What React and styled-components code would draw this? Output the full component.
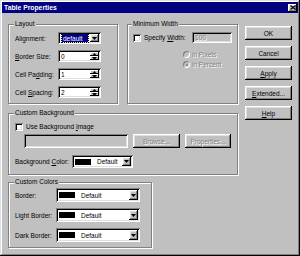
import React from "react";
import styled, { createGlobalStyle } from "styled-components";

const GlobalStyle = createGlobalStyle`
  html, body {
    margin: 0;
    padding: 0;
    background: #c0c0c0;
  }
  body {
    font-family: "Liberation Sans", Arial, sans-serif;
    font-size: 6.5px;
    color: #000;
  }
`;

const raised = `
  box-shadow: inset -1px -1px #000, inset 1px 1px #fff, inset -2px -2px #808080, inset 2px 2px #dfdfdf;
`;

const sunken = `
  box-shadow: inset 1px 1px #808080, inset -1px -1px #fff, inset 2px 2px #000, inset -2px -2px #dfdfdf;
`;

const Window = styled.div`
  width: 300px;
  height: 256px;
  box-sizing: border-box;
  padding: 2px;
  background: #c0c0c0;
  box-shadow: inset -1px -1px #000, inset 1px 1px #dfdfdf, inset -2px -2px #808080, inset 2px 2px #fff;
  display: flex;
  flex-direction: column;
`;

const TitleBar = styled.div`
  height: 11px;
  background: #000080;
  display: flex;
  align-items: center;
  justify-content: space-between;
  padding: 0 1px 0 2px;
`;

const Title = styled.span`
  color: #fff;
  font-weight: bold;
  font-size: 6.8px;
`;

const CloseBox = styled.div`
  width: 9px;
  height: 8px;
  background: #c0c0c0;
  display: flex;
  align-items: center;
  justify-content: center;
  ${raised}
`;

const Body = styled.div`
  display: flex;
  padding: 11px 7px 0 6px;
  gap: 7px;
`;

const LeftCol = styled.div`
  width: 230px;
  display: flex;
  flex-direction: column;
`;

const TopRow = styled.div`
  display: grid;
  grid-template-columns: 110px 111px;
  gap: 9px;
`;

const Group = styled.div`
  box-sizing: border-box;
  border: 1px solid #808080;
  box-shadow: inset 1px 1px #fff, 1px 1px #fff;
  padding: 0 ${(p) => p.$pad ?? 6}px ${(p) => p.$bottom ?? 5}px;
  width: ${(p) => (p.$w ? `${p.$w}px` : "auto")};
  margin-top: ${(p) => p.$mt ?? 0}px;
`;

const Caption = styled.div`
  margin: -5px 0 0 -1px;
  padding: 0 1px;
  width: fit-content;
  line-height: 8px;
  background: #c0c0c0;
`;

const FormGrid = styled.div`
  display: grid;
  grid-template-columns: ${(p) => p.$cols};
  row-gap: ${(p) => p.$gap}px;
  align-items: center;
  margin-top: ${(p) => p.$mt}px;
`;

const Label = styled.span`
  white-space: nowrap;
  color: ${(p) => (p.$disabled ? "#808080" : "#000")};
  text-shadow: ${(p) => (p.$disabled ? "1px 1px #fff" : "none")};
`;

const U = styled.span`
  text-decoration: underline;
`;

const Field = styled.div`
  box-sizing: border-box;
  height: ${(p) => p.$h}px;
  width: ${(p) => (p.$w ? `${p.$w}px` : "auto")};
  background: ${(p) => (p.$disabled ? "#c0c0c0" : "#fff")};
  ${sunken}
  display: flex;
  align-items: center;
  padding: 2px;
  color: ${(p) => (p.$disabled ? "#808080" : "#000")};
`;

const FieldText = styled.span`
  flex: 1;
  padding-left: 1px;
  white-space: nowrap;
  display: flex;
  align-self: stretch;
  align-items: center;
`;

const Spin = styled.div`
  width: 9px;
  align-self: stretch;
  display: flex;
  flex-direction: column;
`;

const SpinBtn = styled.div`
  flex: 1;
  background: #c0c0c0;
  display: flex;
  align-items: center;
  justify-content: center;
  box-shadow: inset -1px -1px #000, inset 1px 1px #fff, inset -1px -1px #808080;
`;

const DropBtn = styled.div`
  width: 9px;
  align-self: stretch;
  background: #c0c0c0;
  display: flex;
  align-items: center;
  justify-content: center;
  ${raised}
`;

const Highlight = styled.span`
  flex: 1;
  align-self: stretch;
  display: flex;
  align-items: center;
  background: #000080;
  color: #fff;
  outline: 1px dotted #000;
  padding: 0 1px;
  margin: 0 2px 0 1px;
`;

const Swatch = styled.span`
  width: 16px;
  height: 6px;
  background: #000;
  margin: 0 5px 0 1px;
`;

const Check = styled.span`
  width: 8px;
  height: 8px;
  box-sizing: border-box;
  background: #fff;
  ${sunken}
  flex: none;
`;

const CheckRow = styled.div`
  display: flex;
  align-items: center;
  gap: 3px;
  height: ${(p) => p.$h}px;
  margin-top: ${(p) => p.$mt}px;
`;

const RadioList = styled.div`
  display: flex;
  flex-direction: column;
  gap: 3px;
  margin: 8px 0 0 50px;
`;

const RadioRow = styled.div`
  display: flex;
  align-items: center;
  gap: 2px;
  height: 7px;
`;

const Radio = styled.span`
  width: 7px;
  height: 7px;
  border-radius: 50%;
  box-sizing: border-box;
  background: #c0c0c0;
  box-shadow: inset 1px 1px #808080, inset -1px -1px #fff;
  display: flex;
  align-items: center;
  justify-content: center;
  &::after {
    content: "";
    width: 2px;
    height: 2px;
    border-radius: 50%;
    background: ${(p) => (p.$on ? "#808080" : "transparent")};
  }
`;

const Row = styled.div`
  display: flex;
  align-items: center;
  gap: ${(p) => p.$gap ?? 5}px;
  margin-top: ${(p) => p.$mt ?? 0}px;
  padding-left: ${(p) => p.$indent ?? 0}px;
`;

const Button = styled.div`
  box-sizing: border-box;
  width: ${(p) => p.$w ?? 47}px;
  height: 14px;
  background: #c0c0c0;
  ${raised}
  display: flex;
  align-items: center;
  justify-content: center;
  color: ${(p) => (p.$disabled ? "#808080" : "#000")};
  text-shadow: ${(p) => (p.$disabled ? "1px 1px #fff" : "none")};
  flex: none;
`;

const RightCol = styled.div`
  display: flex;
  flex-direction: column;
  gap: 6px;
  padding-top: 2px;
`;

const UpArrow = () => (
  <svg width="5" height="3" viewBox="0 0 5 3">
    <path d="M2.5 0 L5 3 L0 3 Z" fill="#000" />
  </svg>
);

const DownArrow = () => (
  <svg width="5" height="3" viewBox="0 0 5 3">
    <path d="M0 0 L5 0 L2.5 3 Z" fill="#000" />
  </svg>
);

const Spinner = ({ value }) => (
  <Field $h={12} $w={43}>
    <FieldText>{value}</FieldText>
    <Spin>
      <SpinBtn>
        <UpArrow />
      </SpinBtn>
      <SpinBtn>
        <DownArrow />
      </SpinBtn>
    </Spin>
  </Field>
);

const ColorSelect = ({ w, h = 14 }) => (
  <Field $h={h} $w={w}>
    <Swatch />
    <FieldText>Default</FieldText>
    <DropBtn>
      <DownArrow />
    </DropBtn>
  </Field>
);

export default function App() {
  return (
    <>
      <GlobalStyle />
      <Window>
        <TitleBar>
          <Title>Table Properties</Title>
          <CloseBox>
            <svg width="6" height="5" viewBox="0 0 6 5">
              <path d="M0.5 0.5 L5.5 4.5 M5.5 0.5 L0.5 4.5" stroke="#000" strokeWidth="1.2" />
            </svg>
          </CloseBox>
        </TitleBar>
        <Body>
          <LeftCol>
            <TopRow>
              <Group $bottom={5}>
                <Caption>Layout</Caption>
                <FormGrid $cols="43px 43px" $gap={6} $mt={4}>
                  <Label>Alignment:</Label>
                  <Field $h={12} $w={43}>
                    <FieldText>
                      <Highlight>default</Highlight>
                    </FieldText>
                    <DropBtn>
                      <DownArrow />
                    </DropBtn>
                  </Field>
                  <Label>
                    <U>B</U>order Size:
                  </Label>
                  <Spinner value="0" />
                  <Label>
                    Cell Pa<U>d</U>ding:
                  </Label>
                  <Spinner value="1" />
                  <Label>
                    Cell <U>S</U>pacing:
                  </Label>
                  <Spinner value="2" />
                </FormGrid>
              </Group>
              <Group $pad={5}>
                <Caption>Minimum Width</Caption>
                <Row $mt={4} $gap={3}>
                  <Check />
                  <Label>
                    Specify <U>W</U>idth:
                  </Label>
                  <Field $h={11} $w={40} $disabled style={{ marginLeft: "auto" }}>
                    <FieldText>
                      <Label $disabled>100</Label>
                    </FieldText>
                  </Field>
                </Row>
                <RadioList>
                  <RadioRow>
                    <Radio />
                    <Label $disabled>in Pixels</Label>
                  </RadioRow>
                  <RadioRow>
                    <Radio $on />
                    <Label $disabled>in Percent</Label>
                  </RadioRow>
                </RadioList>
              </Group>
            </TopRow>

            <Group $mt={9} $bottom={6}>
              <Caption>Custom Background</Caption>
              <CheckRow $h={9} $mt={5}>
                <Check />
                <Label>
                  Use Background <U>I</U>mage
                </Label>
              </CheckRow>
              <Row $mt={3} $indent={9}>
                <Field $h={14} $w={104} $disabled />
                <Button $disabled>Browse...</Button>
                <Button $disabled $w={46}>
                  Properties...
                </Button>
              </Row>
              <Row $mt={7} $gap={0}>
                <Label style={{ width: 57 }}>
                  Background <U>C</U>olor:
                </Label>
                <ColorSelect w={61} h={13} />
              </Row>
            </Group>

            <Group $w={144} $mt={7} $bottom={5}>
              <Caption>Custom Colors</Caption>
              <FormGrid $cols="41px 84px" $gap={6} $mt={2}>
                <Label>Border:</Label>
                <ColorSelect w={84} />
                <Label>Light Border:</Label>
                <ColorSelect w={84} />
                <Label>Dark Border:</Label>
                <ColorSelect w={84} />
              </FormGrid>
            </Group>
          </LeftCol>

          <RightCol>
            <Button>OK</Button>
            <Button>Cancel</Button>
            <Button>
              <U>A</U>pply
            </Button>
            <Button>
              <U>E</U>xtended...
            </Button>
            <Button>
              <U>H</U>elp
            </Button>
          </RightCol>
        </Body>
      </Window>
    </>
  );
}
